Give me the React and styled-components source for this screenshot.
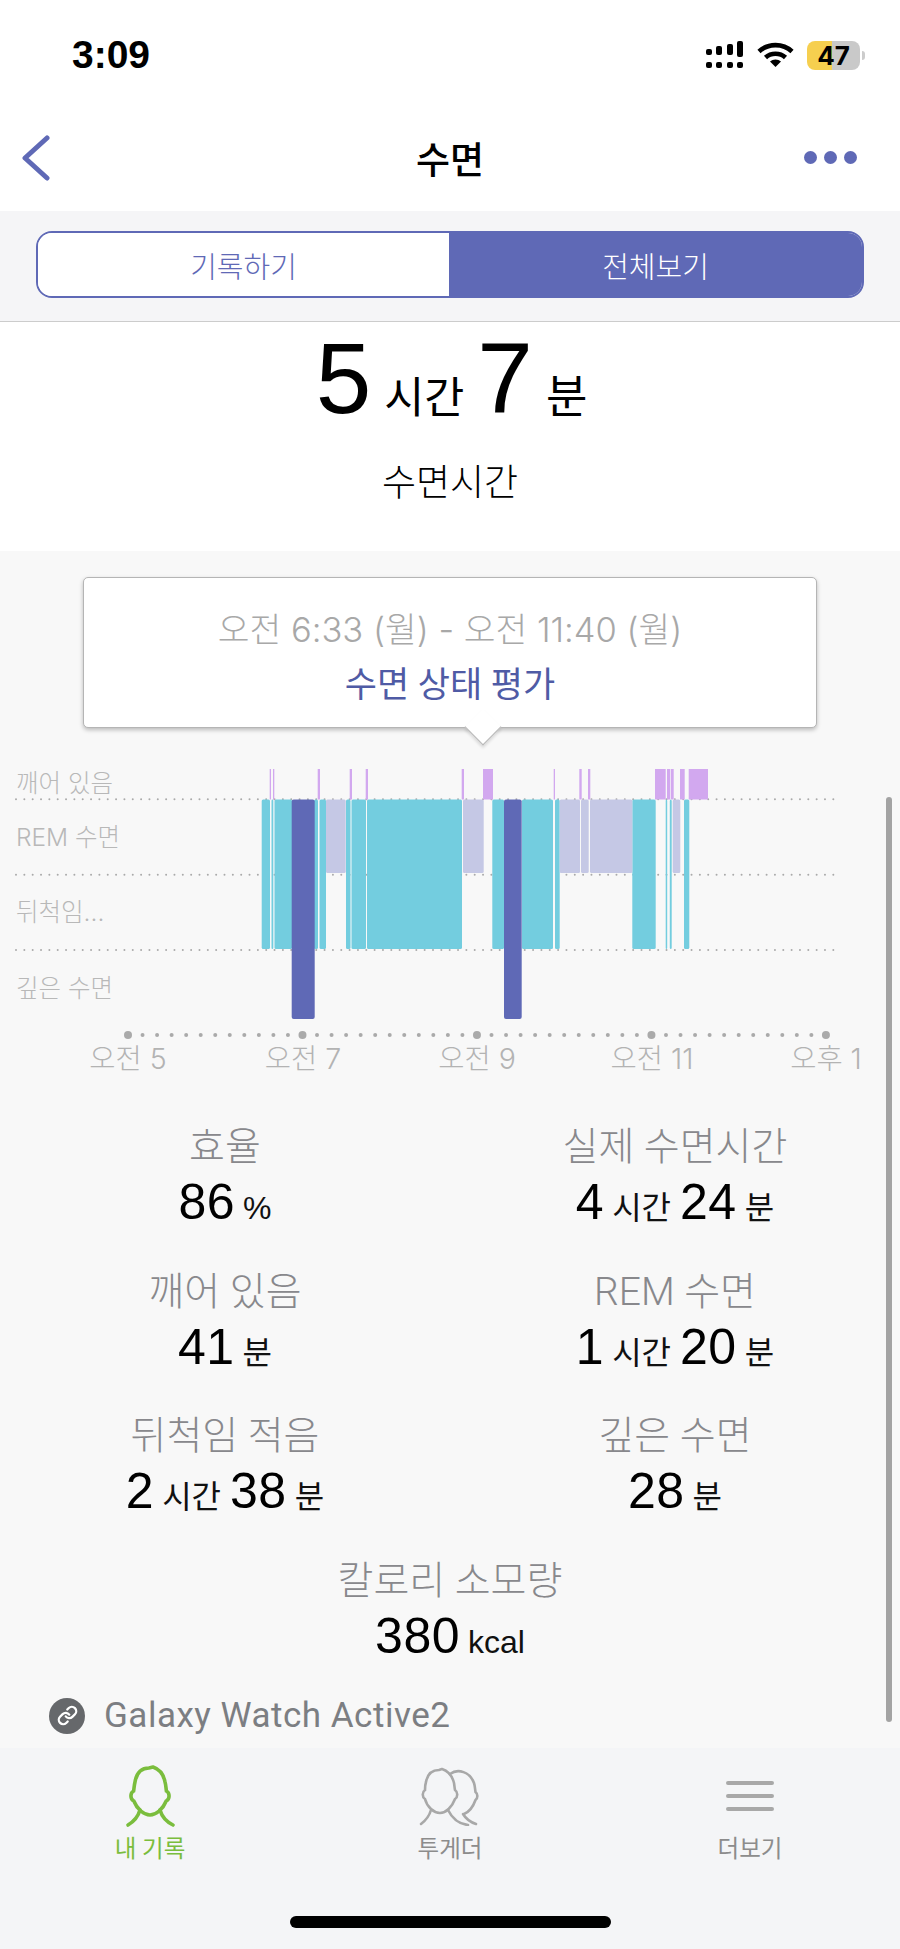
import styled, { createGlobalStyle } from "styled-components";
import { Link } from "lucide-react";

const FONT = `Roboto, "Noto Sans CJK KR", sans-serif`;
const TEXT_WIDE = `Inter, "Noto Sans CJK KR", sans-serif`;
const NUMERIC = `"Liberation Sans", "Noto Sans CJK KR", sans-serif`;
const PURPLE = "#5f69b6";

const GlobalStyle = createGlobalStyle`
  html, body { margin: 0; padding: 0; background: #fff; }
  * { box-sizing: border-box; }
  body { font-family: ${FONT}; }
`;

// chart data, x in page pixels
const AWAKE = [[269.7, 271], [273, 274.3], [317.7, 320], [349.7, 352], [365.7, 368], [461.7, 464], [483, 493], [553.7, 555], [579.3, 581.7], [588, 590.3], [655, 665.7], [667, 670.3], [671, 673.7], [680, 684.7], [688.7, 708]];
const LIGHT = [[261.7, 270], [271.5, 273.3], [274.5, 292], [314, 318], [319.5, 326], [346, 350.5], [351.5, 366], [367, 462], [492.3, 504], [522, 553], [555, 559.7], [632.3, 655.7], [665.7, 667.2], [669.8, 671.7], [684, 689.3]];
const REM = [[326, 345.7], [463, 483.7], [559.7, 580], [581, 588.7], [590, 632.3], [672.7, 680.3]];
const DEEP = [[291.7, 314.7], [504, 521.7]];

const ROW_LABELS = [["깨어 있음", 23], ["REM 수면", 77], ["뒤척임...", 152], ["깊은 수면", 228]];
const HOURS = [["오전 5", 128], ["오전 7", 303], ["오전 9", 477], ["오전 11", 652], ["오후 1", 826]];

const STATS = [
  { label: "효율", value: [["86", "%"]] },
  { label: "실제 수면시간", value: [["4", "시간"], ["24", "분"]] },
  { label: "깨어 있음", value: [["41", "분"]] },
  { label: "REM 수면", value: [["1", "시간"], ["20", "분"]] },
  { label: "뒤척임 적음", value: [["2", "시간"], ["38", "분"]] },
  { label: "깊은 수면", value: [["28", "분"]] },
  { label: "칼로리 소모량", value: [["380", "kcal"]], wide: true },
];

const SignalIcon = () => (
  <svg width="38" height="28" viewBox="0 0 38 28" fill="#000">
    <rect x="0" y="21" width="6" height="6" rx="2" />
    <rect x="10" y="21" width="6" height="6" rx="2" />
    <rect x="21" y="21" width="6" height="6" rx="2" />
    <rect x="31" y="21" width="6" height="6" rx="2" />
    <rect x="0" y="8" width="6" height="6" rx="2" />
    <rect x="10" y="5" width="6" height="9" rx="2" />
    <rect x="21" y="3" width="6" height="11" rx="2" />
    <rect x="31" y="0" width="6" height="16" rx="2" />
  </svg>
);

const WifiIcon = () => (
  <svg width="37" height="26" viewBox="0 0 37 26" fill="none" stroke="#000" strokeWidth="4.6">
    <path d="M2 9.5 C11 1 26 1 35 9.5" />
    <path d="M8.5 15.5 C14 10.5 23 10.5 28.5 15.5" />
    <path d="M13 19.5 L18.5 25 L24 19.5 C21 16.8 16 16.8 13 19.5 Z" fill="#000" stroke="none" />
  </svg>
);

const PersonIcon = () => (
  <svg width="50" height="66" viewBox="0 0 50 66" fill="none" stroke="#7abd3d" strokeWidth="3.6" strokeLinecap="round">
    <path d="M28 4 L24 5 C16 5 11.5 10 10 19 C9.2 22 9 26 8.6 28 C5 30 5 36 8.8 38 C12 46 19 52 25 52 C31 52 38 46 41.2 38 C45 36 45 30 41.4 28 C41 26 41 22 40 19 C38.5 11 34 6 28 4 Z" />
    <path d="M15 47 C13 54 8 59 3 62" />
    <path d="M35 47 C37 54 42 59 48 62" />
  </svg>
);

const TogetherIcon = () => (
  <svg width="62" height="60" viewBox="0 0 62 60" fill="none" stroke="#a8a8a8" strokeWidth="2.6" strokeLinecap="round">
    <path d="M23 3 L20 4 C13 4 8.5 8 7 16 C6 19 6 21 6 24 C3 26 3 31 6 33 C8 41 15 47 21 47 C27 47 33 41 36 33 C39 31 39 26 36 24 C35.5 22 35.5 20 35 17 C33 9 29 5 23 3 Z" />
    <path d="M31 8 C39 2 51 6 55 17 C56 20 56 23 56.5 26 C59 28 59 32 56.5 34 C54 41 50 46 45 48" />
    <path d="M12 44 C10 51 6 55 2 58" />
    <path d="M29 44 C33 52 40 58 49 59" />
    <path d="M44 48 C47 53 51 56 57 58" />
  </svg>
);

const MenuIcon = () => (
  <svg width="48" height="30" viewBox="0 0 48 30" fill="none" stroke="#a8a8a8" strokeWidth="4" strokeLinecap="round">
    <path d="M2 2 H46 M2 15 H46 M2 28 H46" />
  </svg>
);

const Chart = () => {
  const ticks = [];
  for (let i = 0; i <= 48; i++) ticks.push(i);
  return (
    <ChartSvg viewBox="0 0 900 325">
      {[39.3, 114.7, 190].map((y) => (
        <GridLine key={y} x1="16" x2="834" y1={y} y2={y} />
      ))}
      {ROW_LABELS.map(([text, y]) => (
        <RowLabel key={text} x="16" y={y}>{text}</RowLabel>
      ))}
      {AWAKE.map(([a, b]) => <rect key={a} x={a} y="9" width={b - a} height="30.5" fill="#d2a8ef" />)}
      {LIGHT.map(([a, b]) => <rect key={a} x={a} y="39.5" width={b - a} height="149.5" rx="1.5" fill="#73cddf" />)}
      {REM.map(([a, b]) => <rect key={a} x={a} y="39.5" width={b - a} height="73.5" rx="1.5" fill="#c5c8e5" />)}
      {DEEP.map(([a, b]) => <rect key={a} x={a} y="39.5" width={b - a} height="219.5" rx="2" fill={PURPLE} />)}
      {ticks.map((i) => (
        <circle key={i} cx={128 + i * 14.54} cy="275" r={i % 12 === 0 ? 4 : 2} fill="#aaa" />
      ))}
      {HOURS.map(([text, x]) => (
        <HourLabel key={text} x={x} y="298">{text}</HourLabel>
      ))}
    </ChartSvg>
  );
};

export default function App() {
  return (
    <>
      <GlobalStyle />
      <Page>
        <StatusBar>
          <Clock>3:09</Clock>
          <StatusIcons>
            <SignalIcon />
            <WifiIcon />
            <Battery $level={47}>47</Battery>
          </StatusIcons>
        </StatusBar>
        <NavBar>
          <svg width="28" height="46" viewBox="0 0 28 46" fill="none" stroke={PURPLE} strokeWidth="5" strokeLinecap="round" strokeLinejoin="round">
            <path d="M25 3 L3 23 L25 43" />
          </svg>
          <NavTitle>수면</NavTitle>
          <MoreDots>
            <i /><i /><i />
          </MoreDots>
        </NavBar>
        <SegmentArea>
          <Segment>
            <SegmentItem>기록하기</SegmentItem>
            <SegmentItem $active>전체보기</SegmentItem>
          </Segment>
        </SegmentArea>
        <Summary>
          <BigValue>
            <BigNumber>5</BigNumber><BigUnit>시간</BigUnit>
            <BigNumber>7</BigNumber><BigUnit>분</BigUnit>
          </BigValue>
          <SummaryLabel>수면시간</SummaryLabel>
        </Summary>
        <Detail>
          <Tooltip>
            <TooltipTime>오전 6:33 (월) - 오전 11:40 (월)</TooltipTime>
            <TooltipLink>수면 상태 평가</TooltipLink>
          </Tooltip>
          <Chart />
          <StatGrid>
            {STATS.map((s) => (
              <Stat key={s.label} $wide={s.wide}>
                <StatLabel>{s.label}</StatLabel>
                <StatValue>
                  {s.value.map(([num, unit]) => (
                    <span key={unit}>
                      <StatNumber>{num}</StatNumber>
                      <StatUnit>{unit}</StatUnit>
                    </span>
                  ))}
                </StatValue>
              </Stat>
            ))}
          </StatGrid>
          <Device>
            <DeviceBadge><Link size={21} color="#fff" strokeWidth={2.6} /></DeviceBadge>
            <DeviceName>Galaxy Watch Active2</DeviceName>
          </Device>
        </Detail>
        <TabBar>
          <Tabs>
            <Tab $active>
              <TabIcon><PersonIcon /></TabIcon>
              내 기록
            </Tab>
            <Tab>
              <TabIcon><TogetherIcon /></TabIcon>
              투게더
            </Tab>
            <Tab>
              <TabIcon><MenuIcon /></TabIcon>
              더보기
            </Tab>
          </Tabs>
          <HomeIndicator />
        </TabBar>
        <Scrollbar />
      </Page>
    </>
  );
}

const Page = styled.div`
  position: relative;
  width: 900px;
  height: 1949px;
  overflow: hidden;
  display: flex;
  flex-direction: column;
`;

const StatusBar = styled.div`
  height: 110px;
  display: flex;
  align-items: center;
  justify-content: space-between;
  padding: 0 40px 0 72px;
`;

const Clock = styled.div`
  font-family: "Liberation Sans", sans-serif;
  font-size: 39px;
  font-weight: 700;
  color: #000;
`;

const StatusIcons = styled.div`
  display: flex;
  align-items: center;
  gap: 13px;
`;

const Battery = styled.div`
  position: relative;
  width: 53px;
  height: 29px;
  border-radius: 8px;
  background: linear-gradient(to right, #f6cf4f ${(p) => p.$level}%, #c9c9c9 ${(p) => p.$level}%);
  font-family: Inter, sans-serif;
  font-size: 26px;
  font-weight: 700;
  line-height: 29px;
  text-align: center;
  color: #000;
  &::after {
    content: "";
    position: absolute;
    right: -5px;
    top: 10px;
    width: 3px;
    height: 9px;
    border-radius: 0 3px 3px 0;
    background: #ccc;
  }
`;

const NavBar = styled.div`
  height: 101px;
  display: grid;
  grid-template-columns: 1fr auto 1fr;
  align-items: center;
  padding: 0 22px 6px;
`;

const NavTitle = styled.div`
  font-size: 37px;
  font-weight: 500;
  color: #000;
`;

const MoreDots = styled.div`
  justify-self: end;
  margin-right: 21px;
  display: flex;
  gap: 7px;
  i {
    width: 13px;
    height: 13px;
    border-radius: 50%;
    background: ${PURPLE};
  }
`;

const SegmentArea = styled.div`
  height: 111px;
  padding: 20px 36px 0;
  background: #f5f5f7;
  border-bottom: 1px solid #ccc;
`;

const Segment = styled.div`
  height: 67px;
  display: grid;
  grid-template-columns: 411px 1fr;
  border: 2px solid ${PURPLE};
  border-radius: 16px;
  overflow: hidden;
`;

const SegmentItem = styled.div`
  display: flex;
  align-items: center;
  justify-content: center;
  font-size: 29px;
  font-weight: 300;
  color: ${(p) => (p.$active ? "#fff" : PURPLE)};
  background: ${(p) => (p.$active ? PURPLE : "#fff")};
`;

const Summary = styled.div`
  height: 229px;
  background: #fff;
  text-align: center;
`;

const BigValue = styled.div`
  height: 112px;
  display: flex;
  align-items: baseline;
  justify-content: center;
  padding-left: 3px;
`;

const BigNumber = styled.span`
  font-family: ${NUMERIC};
  font-size: 100px;
  line-height: 112px;
  color: #000;
`;

const BigUnit = styled.span`
  font-size: 43.5px;
  font-weight: 400;
  margin: 0 13px;
  color: #000;
  &:last-child {
    font-size: 45px;
    margin-right: 0;
  }
`;

const SummaryLabel = styled.div`
  margin-top: 19px;
  font-size: 37px;
  font-weight: 300;
  color: #000;
`;

const Detail = styled.div`
  height: 1197px;
  padding-top: 26px;
  background: #f8f8f8;
  display: flex;
  flex-direction: column;
`;

const Tooltip = styled.div`
  position: relative;
  width: 734px;
  height: 151px;
  margin: 0 auto 32px;
  padding-top: 30px;
  text-align: center;
  background: #fff;
  border: 1.5px solid #b5b5b5;
  border-radius: 5px;
  box-shadow: 0 2px 4px rgba(0, 0, 0, 0.25);
  &::after {
    content: "";
    position: absolute;
    left: 386px;
    bottom: -13px;
    width: 25px;
    height: 25px;
    background: #fff;
    border-right: 1.5px solid #b5b5b5;
    border-bottom: 1.5px solid #b5b5b5;
    transform: rotate(45deg);
    box-shadow: 2px 2px 3px rgba(0, 0, 0, 0.12);
  }
`;

const TooltipTime = styled.div`
  font-family: ${TEXT_WIDE};
  font-size: 34.5px;
  font-weight: 300;
  line-height: 44px;
  color: #a8a8a8;
`;

const TooltipLink = styled.div`
  margin-top: 12px;
  font-size: 35px;
  font-weight: 400;
  line-height: 44px;
  color: #4f5ba5;
`;

const ChartSvg = styled.svg`
  display: block;
  width: 900px;
  height: 325px;
  flex-shrink: 0;
`;

const GridLine = styled.line`
  stroke: #aaa;
  stroke-width: 2;
  stroke-linecap: round;
  stroke-dasharray: 0 8.34;
`;

const RowLabel = styled.text`
  font-family: ${TEXT_WIDE};
  font-size: 24.5px;
  font-weight: 300;
  fill: #b8b8b8;
  dominant-baseline: central;
`;

const HourLabel = styled.text`
  font-family: ${TEXT_WIDE};
  font-size: 28.5px;
  font-weight: 300;
  fill: #b3b3b3;
  text-anchor: middle;
  dominant-baseline: central;
`;

const StatGrid = styled.div`
  display: grid;
  grid-template-columns: 1fr 1fr;
  grid-auto-rows: 144.5px;
  margin-top: 36px;
  margin-bottom: -4px;
`;

const Stat = styled.div`
  text-align: center;
  ${(p) => p.$wide && "grid-column: 1 / -1;"}
`;

const StatLabel = styled.div`
  font-size: 39px;
  font-weight: 300;
  line-height: 52px;
  color: #88888c;
`;

const StatValue = styled.div`
  display: flex;
  justify-content: center;
  align-items: baseline;
  gap: 9px;
  line-height: 58px;
`;

const StatNumber = styled.span`
  font-family: ${NUMERIC};
  font-size: 50px;
  letter-spacing: 0.5px;
  color: #000;
`;

const StatUnit = styled.span`
  margin-left: 8px;
  font-family: ${NUMERIC};
  font-size: 32px;
  font-weight: 400;
  color: #111;
`;

const Device = styled.div`
  display: flex;
  align-items: center;
  gap: 19px;
  padding-left: 49px;
`;

const DeviceBadge = styled.div`
  width: 36px;
  height: 36px;
  border-radius: 50%;
  background: #66686b;
  display: flex;
  align-items: center;
  justify-content: center;
`;

const DeviceName = styled.div`
  font-size: 35px;
  font-weight: 400;
  letter-spacing: 0.5px;
  color: #7c7e82;
`;

const TabBar = styled.div`
  flex: 1;
  background: #f4f5f7;
  display: flex;
  flex-direction: column;
  align-items: center;
`;

const Tabs = styled.div`
  width: 100%;
  display: grid;
  grid-template-columns: repeat(3, 1fr);
  padding-top: 16px;
`;

const Tab = styled.div`
  display: flex;
  flex-direction: column;
  align-items: center;
  font-size: 23.5px;
  line-height: 34px;
  font-weight: 400;
  color: ${(p) => (p.$active ? "#7abd3d" : "#8c8c8c")};
`;

const TabIcon = styled.div`
  height: 68px;
  padding-bottom: 5px;
  display: flex;
  align-items: center;
  justify-content: center;
`;

const HomeIndicator = styled.div`
  width: 321px;
  height: 12px;
  margin-top: 50px;
  border-radius: 6px;
  background: #000;
`;

const Scrollbar = styled.div`
  position: absolute;
  left: 886px;
  top: 797px;
  width: 6px;
  height: 925px;
  border-radius: 3px;
  background: #a3a3a3;
`;
